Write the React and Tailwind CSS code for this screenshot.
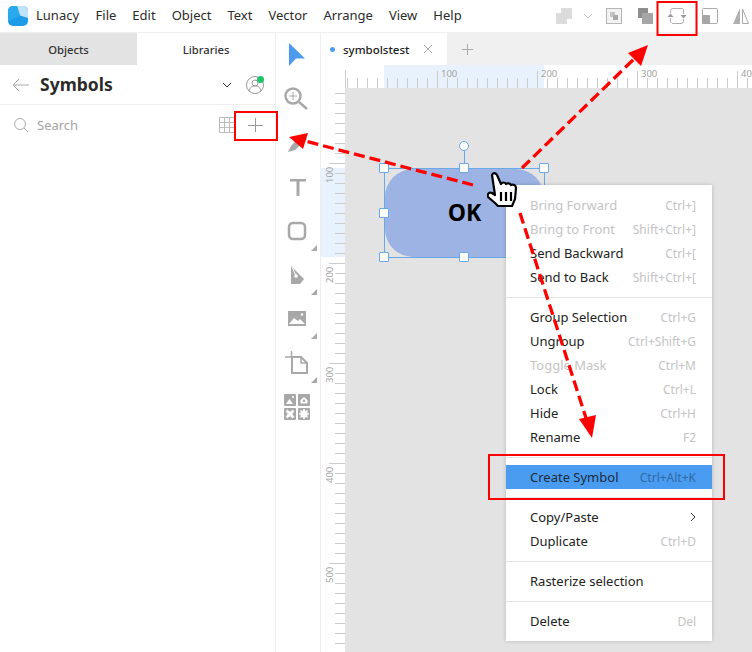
const uiFont = "font-['Noto_Sans',sans-serif]"

const menuBar = ['File', 'Edit', 'Object', 'Text', 'Vector', 'Arrange', 'View', 'Help']

const menuGroups = [
  [
    ['Bring Forward', 'Ctrl+]', true],
    ['Bring to Front', 'Shift+Ctrl+]', true],
    ['Send Backward', 'Ctrl+['],
    ['Send to Back', 'Shift+Ctrl+['],
  ],
  [
    ['Group Selection', 'Ctrl+G'],
    ['Ungroup', 'Ctrl+Shift+G'],
    ['Toggle Mask', 'Ctrl+M', true],
    ['Lock', 'Ctrl+L'],
    ['Hide', 'Ctrl+H'],
    ['Rename', 'F2'],
  ],
  [['Create Symbol', 'Ctrl+Alt+K', false, true]],
  [
    ['Copy/Paste', '>'],
    ['Duplicate', 'Ctrl+D'],
  ],
  [['Rasterize selection', '']],
  [['Delete', 'Del']],
]

function LunacyLogo() {
  return (
    <svg width="20" height="20" viewBox="0 0 20 20">
      <rect width="20" height="20" rx="5" fill="#1e9be8" />
      <path d="M9 0h6a5 5 0 0 1 5 5v7L12 9.500z" fill="#bfe3f8" />
      <path d="M0 5a5 5 0 0 1 5-5h4l3 9.500L5 13 0 15z" fill="#29a9ee" />
    </svg>
  )
}

function TopIcons() {
  return (
    <div className="flex items-center ml-auto h-full">
      <svg width="198" height="32" viewBox="0 0 198 32" className="mr-[-1px]">
        <g fill="#dcdcdc">
          <rect x="1" y="13" width="11" height="11" />
          <rect x="6" y="8" width="11" height="11" />
        </g>
        <g transform="translate(2 0)">
          <path d="M27 14l4 4 4-4" fill="none" stroke="#c8c8c8" />
          <rect x="49.500" y="8.500" width="15" height="15" fill="#f2f2f2" stroke="#b5b5b5" />
          <rect x="53" y="12" width="5" height="5" fill="#c4c4c4" />
          <rect x="56" y="15" width="5" height="5" fill="#a8a8a8" />
          <rect x="81" y="8" width="10" height="10" fill="#8e8e8e" />
          <rect x="85" y="13" width="11" height="11" fill="#a6a6a6" />
          <g fill="none" stroke="#b0b0b0">
            <path d="M113.500 13v-2a2.500 2.500 0 0 1 2.500-2.500h9.500" />
            <path d="M126.500 19v2a2.500 2.500 0 0 1-2.500 2.500h-9" />
            <path d="M113.500 18v3a2.500 2.500 0 0 0 1 2" />
            <path d="M126.500 14v-3a2.500 2.500 0 0 0-1-2.500" />
          </g>
          <path d="M110.500 17h6l-3-3.500zM123.500 15h6l-3 3.500z" fill="#999" />
          <rect x="145.500" y="8.500" width="15" height="15" rx="1" fill="none" stroke="#aaa" />
          <rect x="145" y="15" width="8" height="9" rx="1" fill="#a6a6a6" />
          <path d="M183 8v16h-7z" fill="#b0b0b0" />
          <path d="M185.500 9v14.500h6z" fill="none" stroke="#aaa" />
        </g>
      </svg>
    </div>
  )
}

function Toolbar() {
  const tools = [
    [<path d="M13 11l16 15.500h-9L13 34z" fill="#4d9bf0" />, false],
    [
      <g fill="none" stroke="#a8a8a8">
        <circle cx="17" cy="20" r="7.500" strokeWidth="2.500" />
        <path d="M23 26l8 7" strokeWidth="2.500" />
        <path d="M13 20h8M17 16v8" />
      </g>,
      false,
    ],
    [<path d="M12 32l3-6 11-12 5 5-12 11z" fill="#a8a8a8" />, false],
    [<path d="M14 15h16v2.500h-6.500V32h-3V17.500H14z" fill="#a8a8a8" />, false],
    [<rect x="13" y="15" width="16" height="16" rx="4" fill="none" stroke="#a8a8a8" strokeWidth="2.500" />, true],
    [
      <g>
        <path d="M15 14l13 13-4 5h-9z" fill="#a8a8a8" />
        <path d="M16 15l4 9" stroke="#fff" />
        <circle cx="20" cy="24" r="1.800" fill="#fff" />
      </g>,
      true,
    ],
    [
      <g>
        <rect x="12" y="15" width="18" height="15" fill="#a8a8a8" />
        <path d="M13 28l5-6 4 3 2-2 5 5z" fill="#fff" />
        <circle cx="26" cy="18.500" r="1.200" fill="#fff" />
      </g>,
      true,
    ],
    [
      <g fill="none" stroke="#a8a8a8">
        <path d="M16 17h9l6 6v10H16z" strokeWidth="2" />
        <path d="M25 18v5h6" strokeWidth="1.500" />
        <path d="M9 17h6M15.500 11v6" strokeWidth="1.500" />
      </g>,
      true,
    ],
    [
      <g>
        <rect x="8" y="10" width="12" height="12" rx="1" fill="#a8a8a8" />
        <rect x="22" y="10" width="12" height="12" rx="1" fill="#a8a8a8" />
        <rect x="8" y="24" width="12" height="12" rx="1" fill="#a8a8a8" />
        <rect x="22" y="24" width="12" height="12" rx="1" fill="#a8a8a8" />
        <path d="M10 20l3.500-5 3.500 5z" fill="#fff" />
        <circle cx="17" cy="13" r="1" fill="#fff" />
        <path d="M24.500 16l3.500-3 3.500 3v3.500h-7z" fill="#fff" />
        <circle cx="28" cy="16.800" r="1.200" fill="#a8a8a8" />
        <path d="M10.500 26.500l7 7M17.500 26.500l-7 7" stroke="#fff" strokeWidth="2.500" />
        <circle cx="14" cy="30" r="2.500" fill="#fff" />
        <circle cx="28" cy="30" r="3.600" fill="#fff" />
        <path d="M28 25v10M23 30h10M24.500 26.500l7 7M31.500 26.500l-7 7" stroke="#fff" strokeWidth="1.500" />
      </g>,
      false,
    ],
  ]
  return (
    <div className="w-[45px] shrink-0 border-r border-[#eeeeee] flex flex-col">
      {tools.map(([icon, more], i) => (
        <div key={i} className="relative h-11 flex items-center justify-center">
          <svg width="44" height="44" viewBox="0 0 44 44" className="-translate-y-px">{icon}</svg>
          {more && (
            <svg width="6" height="6" viewBox="0 0 6 6" className="absolute right-[3px] bottom-[2px]">
              <path d="M6 0v6H0z" fill="#a8a8a8" />
            </svg>
          )}
        </div>
      ))}
    </div>
  )
}

function Sidebar() {
  return (
    <div className="w-[276px] shrink-0 border-r border-[#eeeeee] flex flex-col">
      <div className="flex h-8 text-[11.250px] font-medium text-[#333]">
        <div className="w-[137px] bg-[#e3e3e3] flex items-center justify-center">
          <span className="translate-y-px">Objects</span>
        </div>
        <div className="flex-1 flex items-center justify-center">
          <span className="translate-y-px">Libraries</span>
        </div>
      </div>
      <div className="h-10 flex items-center border-b border-[#eeeeee] pl-3 pr-[11px]">
        <svg width="17" height="14" viewBox="0 0 17 14" fill="none" stroke="#aaa">
          <path d="M17 7H1M7 1L1 7l6 6" />
        </svg>
        <span className="ml-[11px] text-[17.500px] font-bold text-[#2b2b2b]">Symbols</span>
        <svg width="10" height="6" viewBox="0 0 10 6" fill="none" stroke="#333" className="ml-auto mr-[14px]">
          <path d="M1 1l4 4 4-4" />
        </svg>
        <div className="relative">
          <svg width="18" height="18" viewBox="0 0 18 18" fill="none" stroke="#999">
            <circle cx="9" cy="9" r="8.500" />
            <circle cx="9" cy="7" r="3" />
            <path d="M3 15c1-4 3-5 6-5s5 1 6 5" />
          </svg>
          <span className="absolute top-0 right-0 size-[7px] rounded-full bg-[#1fc46a]" />
        </div>
      </div>
      <div className="h-10 flex items-center pl-[13px] pr-3">
        <svg width="16" height="16" viewBox="0 0 16 16" fill="none" stroke="#aaa">
          <circle cx="7" cy="7" r="5.500" />
          <path d="M11 11l4 4" />
        </svg>
        <span className="ml-2 text-[13px] text-[#a3a3a3] translate-y-px">Search</span>
        <svg width="16" height="16" viewBox="0 0 16 16" fill="none" stroke="#bbb" className="ml-auto">
          <path d="M.5.500h15v15H.5zM.5 5.500h15M.5 10.500h15M5.500.500v15M10.500.500v15" />
        </svg>
        <svg width="16" height="16" viewBox="0 0 16 16" fill="none" stroke="#999" className="ml-3">
          <path d="M8.500 1v14M1 8.500h15" />
        </svg>
      </div>
    </div>
  )
}

function TopRuler() {
  const ticks = Array.from({ length: 42 }, (_, i) => i * 10)
  return (
    <svg width="407" height="23" viewBox="0 0 407 23" className="block">
      <rect x="39" width="160" height="23" fill="#e8f2fc" />
      <path d="M.5 5V23" stroke="#cccccc" />
      {ticks.map((t) => (
        <path key={t} d={`M${t - 7.5} ${t % 100 === 0 ? 6 : 13}V23`} stroke="#cccccc" />
      ))}
      {[100, 200, 300, 400].map((n) => (
        <text key={n} x={n - 4} y="12" fontSize="9.500" fill="#a3a3a3" fontFamily="Noto Sans">
          {n}
        </text>
      ))}
    </svg>
  )
}

function SideRuler() {
  const ticks = Array.from({ length: 60 }, (_, i) => i * 10)
  return (
    <svg width="24" height="564" viewBox="0 0 24 564" className="block">
      <rect y="80" width="24" height="89" fill="#e8f2fc" />
      {ticks.map((t) => (
        <path key={t} d={`M${t % 100 === 0 ? 8 : 14} ${t - 24.5}H24`} stroke="#cccccc" />
      ))}
      {[100, 200, 300, 400, 500].map((n) => (
        <text
          key={n}
          transform={`translate(12 ${n - 5}) rotate(-90)`}
          fontSize="9.500"
          fill="#a3a3a3"
          fontFamily="Noto Sans"
        >
          {n}
        </text>
      ))}
    </svg>
  )
}

function Canvas() {
  return (
    <div className="flex-1 flex flex-col min-w-0">
      <div className="h-8 bg-[#f0f0f0] flex items-center text-xs">
        <div className="w-[126px] h-full bg-white flex items-center pl-[9px]">
          <span className="size-[5px] rounded-full bg-[#4d9bf0]" />
          <span className="ml-2 text-[11.500px] font-medium text-[#222] translate-y-px">symbolstest</span>
          <svg width="10" height="10" viewBox="0 0 10 10" stroke="#aaa" className="ml-auto mr-[14px]">
            <path d="M1 1l8 8M9 1l-8 8" />
          </svg>
        </div>
        <svg width="11" height="11" viewBox="0 0 11 11" stroke="#aaa" className="ml-[15px]">
          <path d="M5.500 0v11M0 5.500h11" />
        </svg>
      </div>
      <div className="flex h-[23px]">
        <div className="w-6 bg-white" />
        <TopRuler />
      </div>
      <div className="flex flex-1">
        <SideRuler />
        <div className="flex-1 bg-[#e3e3e3]" />
      </div>
    </div>
  )
}

function Handle({ className }) {
  return <div className={`absolute size-[10px] bg-white border-[1.500px] border-[#6aa8ea] rounded-[1px] ${className}`} />
}

function Selection() {
  return (
    <div className="absolute left-[384px] top-[168px] w-[161px] h-[90px] border border-[#6aa8ea]">
      <div className="absolute inset-0 rounded-[28px] bg-[#9db3e3] flex items-center justify-center">
        <span className="text-[23px] font-bold text-black font-['Open_Sans',sans-serif] -translate-y-px">OK</span>
      </div>
      <div className="absolute left-[79px] -top-[19px] w-px h-[14px] bg-[#6aa8ea]" />
      <div className="absolute left-[74px] -top-[28px] size-[10px] rounded-full bg-white border-[1.500px] border-[#6aa8ea]" />
      <Handle className="-left-[6px] -top-[6px]" />
      <Handle className="left-[74px] -top-[6px]" />
      <Handle className="-right-[5px] -top-[6px]" />
      <Handle className="-left-[6px] top-[39px]" />
      <Handle className="-left-[6px] -bottom-[5px]" />
      <Handle className="left-[74px] -bottom-[5px]" />
    </div>
  )
}

function ContextMenu() {
  return (
    <div className="absolute left-[506px] top-[185px] w-[206px] bg-white shadow-[0_0_4px_rgba(0,0,0,0.2)] py-2">
      {menuGroups.map((group, g) => (
        <div key={g}>
          {g > 0 && <div className="h-[17px] -mb-px flex items-center"><div className="w-full h-px bg-[#e3e3e3]" /></div>}
          {group.map(([label, keys, disabled, active]) => (
            <div
              key={label}
              className={`h-6 flex items-center justify-between pl-6 pr-4 text-[13px] ${active ? 'bg-[#4a9cf0] text-[#1c2b3c]' : disabled ? 'text-[#c4c4c4]' : 'text-[#222]'}`}
            >
              <span className="translate-y-px">{label}</span>
              {keys === '>' ? (
                <svg width="6" height="10" viewBox="0 0 6 10" fill="none" stroke="#333">
                  <path d="M1 1l4 4-4 4" />
                </svg>
              ) : (
                <span className={`text-xs translate-y-px ${active ? 'text-[#2f6aa8]' : 'text-[#c4c4c4]'}`}>{keys}</span>
              )}
            </div>
          ))}
        </div>
      ))}
    </div>
  )
}

function HandCursor() {
  return (
    <svg width="36" height="38" viewBox="0 0 34 38" className="absolute left-[487px] top-[171px]">
      <path
        d="M4 4c1-3 4-2 5 0l4 9c1-2 4-2 5 0 1-1 4-1 5 1 2-1 5 0 5 3l-1 11-3 7-14 0-3-3-7-6c-1-3 1-5 4-4l3 2z"
        fill="#fff"
        stroke="#000"
        strokeWidth="2.200"
        strokeLinejoin="round"
      />
      <path d="M13 21v9M18 21v9M23 21v9" stroke="#000" strokeWidth="2.200" />
    </svg>
  )
}

function Annotations() {
  return (
    <svg width="752" height="652" viewBox="0 0 752 652" className="absolute inset-0 pointer-events-none">
      <g stroke="#ff0000" strokeWidth="3.300" strokeDasharray="11 5" fill="none">
        <path d="M473 185L305 141" />
        <path d="M522 168L636 57" />
        <path d="M520 213L586 418" />
      </g>
      <g fill="#ff0000">
        <path d="M289 137l19-4-5 16z" />
        <path d="M648 45l-7 21-13-13z" />
        <path d="M592 438l-13-19 17-4z" />
      </g>
      <g stroke="#ff0000" strokeWidth="2" fill="none">
        <rect x="235" y="112" width="42" height="28" />
        <rect x="657.500" y="2" width="39" height="33" />
        <rect x="489" y="455" width="235" height="44" />
      </g>
    </svg>
  )
}

export default function App() {
  return (
    <div className={`relative w-[752px] h-[652px] overflow-hidden bg-white flex flex-col ${uiFont}`}>
      <header className="h-[33px] shrink-0 flex items-center pl-2 border-b border-[#f0f0f0] text-[13px] text-[#2b2b2b]">
        <LunacyLogo />
        <span className="ml-2">Lunacy</span>
        <nav className="flex gap-4 ml-[16.500px]">
          {menuBar.map((m) => (
            <span key={m}>{m}</span>
          ))}
        </nav>
        <TopIcons />
      </header>
      <main className="flex flex-1 min-h-0">
        <Sidebar />
        <Toolbar />
        <Canvas />
      </main>
      <Selection />
      <ContextMenu />
      <HandCursor />
      <Annotations />
    </div>
  )
}
